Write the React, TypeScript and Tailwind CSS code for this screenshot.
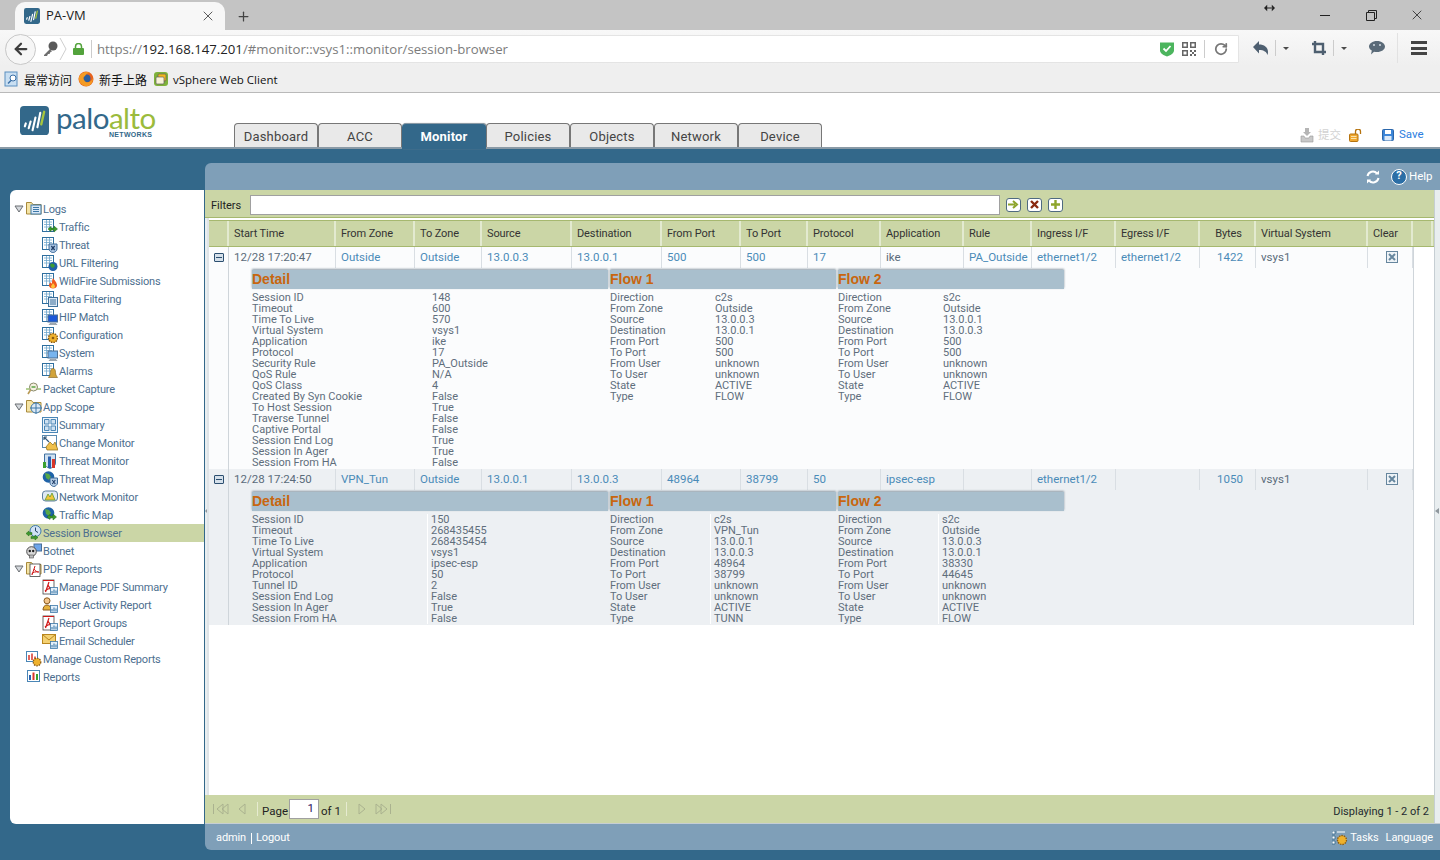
import type { ReactNode } from "react"
import { ArrowLeft, Plus, RotateCw, X } from "lucide-react"

const gridCols =
  "grid-cols-[20px_107px_79px_67px_90px_90px_79px_67px_73px_83px_68px_84px_84px_56px_112px_45px_20px]"

type IconKind = "traffic" | "threat" | "url" | "fire" | "data" | "hip" | "config" | "system" | "bell"

function Page() {
  return (
    <>
      <rect x="0.5" y="0.5" width="11" height="12" fill="#fff" stroke="#2f6f9f" />
      <path d="M2 3h8M2 5.5h8M2 8h8M4.5 1v11M7.5 1v11" stroke="#6ea6cc" strokeWidth="0.8" />
    </>
  )
}

function Badge({ kind }: { kind: IconKind }) {
  switch (kind) {
    case "traffic":
      return <path d="M6 10l3-2.500v1.600h3V7l3.500 3-3.500 3v-2H9v1.500z" fill="#3f9a2e" stroke="#1e6b17" strokeWidth="0.5" />
    case "threat":
      return (
        <>
          <path d="M7 7h8v5c0 2-2 3-4 4-2-1-4-2-4-4z" fill="#a9c4e2" stroke="#3e6a99" />
          <path d="M9.300 9l3.400 4M12.700 9l-3.400 4" stroke="#1f3c66" strokeWidth="1.200" />
        </>
      )
    case "url":
      return (
        <>
          <circle cx="11" cy="11.500" r="4.500" fill="#1f5fa8" />
          <path d="M9 8.500l3 .5 1 2-2 2-2-1-1-2z" fill="#3c9a35" />
        </>
      )
    case "fire":
      return (
        <>
          <path d="M11 5c1 2 4 4 4 7.500 0 2-2 3-4 3s-4-1-4-3c0-2 1-2.500 2-3.500 0 1 .5 1.500 1 1.500 0-2 0-3.500 1-5.500z" fill="#ef5a1e" />
          <path d="M11 10c.5 1 2 2 2 3.500 0 1-1 1.500-2 1.500s-2-.5-2-1.500 1.500-2 2-3.500z" fill="#ffc33a" />
        </>
      )
    case "data":
      return (
        <>
          <rect x="6.500" y="6.500" width="9" height="9" fill="#dce9f5" stroke="#3d6f9a" />
          <path d="M8 9h6M8 11h6M8 13h6" stroke="#3d6f9a" />
        </>
      )
    case "hip":
    case "system":
      return (
        <>
          <rect x="6" y="6" width="9.500" height="7" fill={kind === "hip" ? "#1c58d8" : "#78b4ee"} stroke="#4d6f92" />
          <path d="M8 14.500h6l1 1H7z" fill="#a9b4be" stroke="#6a7683" strokeWidth="0.5" />
        </>
      )
    case "config":
      return (
        <>
          <circle cx="11" cy="11" r="4.500" fill="#efb12c" stroke="#8a5a12" strokeDasharray="1.500 1" strokeWidth="1.500" />
          <circle cx="11" cy="11" r="1.300" fill="#8a5a12" />
        </>
      )
    case "bell":
      return <path d="M11 5.500c2 0 2.500 2 2.500 4 0 2.500 1.500 4 2 5h-9c.5-1 2-2.500 2-5 0-2 .5-4 2.500-4z" fill="#d2a33a" stroke="#7d5c17" strokeWidth="0.6" />
    default:
      return null
  }
}

function LogIcon({ kind }: { kind: IconKind }) {
  return (
    <svg viewBox="0 0 16 16" className="w-4 h-4 shrink-0">
      <Page />
      <Badge kind={kind} />
    </svg>
  )
}

function Folder({ children }: { children: ReactNode }) {
  return (
    <svg viewBox="0 0 16 16" className="w-4 h-4 shrink-0">
      <path d="M.5 13V1.500h5l1.500 2h8V13z" fill="#f5e4a5" stroke="#a88a3c" />
      {children}
    </svg>
  )
}

function PdfPage() {
  return (
    <>
      <rect x="1" y="1" width="11" height="14" fill="#fff" stroke="#444" strokeWidth="0.8" />
      <path d="M1 1.500h11M7 3L3.500 13M6 6c1 3 3 4 6 4.500M3 12c2-2 5-3 8-2.500" fill="none" stroke="#d01818" strokeWidth="1.200" />
    </>
  )
}

function Bars({ x = 8, y = 8 }: { x?: number; y?: number }) {
  return (
    <g transform={`translate(${x} ${y})`}>
      <rect x="0.500" y="0.500" width="7" height="7" fill="#e5f0fa" stroke="#3b78a8" strokeWidth="0.8" />
      <path d="M2 6.500V4M4 6.500V2.500M6 6.500V3.500" stroke="#2d6fa0" strokeWidth="1" />
    </g>
  )
}

function TreeIcon({ kind }: { kind: string }) {
  return (
    <svg viewBox="0 0 16 16" className="w-4 h-4 shrink-0">
      {kind === "packet" && (
        <>
          <path d="M0 8h15" stroke="#6aa32a" />
          <circle cx="7.500" cy="6" r="4" fill="#f5f0e0" stroke="#8a8a6a" />
          <path d="M4.500 9L2 13" stroke="#b89a55" strokeWidth="1.600" />
          <path d="M5.500 6h4" stroke="#3f9a2e" strokeWidth="1.300" />
        </>
      )}
      {kind === "summary" && (
        <>
          <rect x="0.500" y="0.500" width="15" height="15" fill="#eef5fb" stroke="#4a86b6" />
          <path d="M2.500 2.500h4.500v4.500H2.500zM9 2.500h4.500v4.500H9zM2.500 9h4.500v4.500H2.500zM9 9h4.500v4.500H9z" fill="#cfe2f2" stroke="#4a86b6" />
        </>
      )}
      {kind === "change" && (
        <>
          <rect x="0.500" y="0.500" width="14" height="12" fill="#fff" stroke="#5a8ab0" />
          <path d="M2 2l5 5M2 2h3M2 2v3" stroke="#33587a" strokeWidth="1.200" fill="none" />
          <path d="M4 12l4-5 3 3 2-3 3 8H5z" fill="#f0c04a" stroke="#8c6a14" strokeWidth="0.7" />
        </>
      )}
      {kind === "tmonitor" && (
        <>
          <path d="M2.500 1h11v9c0 3-3 4.500-5.500 5.500C5.500 14.500 2.500 13 2.500 10z" fill="#cfe0f0" stroke="#3f70a0" />
          <rect x="1" y="9" width="3" height="6" fill="#3aa02f" />
          <rect x="6" y="3.500" width="3" height="11.500" fill="#2a62b0" />
          <rect x="10" y="6" width="3" height="9" fill="#d8352a" />
        </>
      )}
      {kind === "tmap" && (
        <>
          <circle cx="6.500" cy="6" r="5.800" fill="#1f63a8" />
          <path d="M3 2l4 1 2 3-2 3-3-2z" fill="#58a848" />
          <path d="M8 7h7.500v5c0 2-2 3-3.700 3.700C10 15 8 14 8 12z" fill="#b5cde6" stroke="#3e6a99" />
          <path d="M10.300 9l3 4M13.300 9l-3 4" stroke="#1f3c66" strokeWidth="1.100" />
        </>
      )}
      {kind === "net" && (
        <>
          <rect x="0.500" y="2" width="15" height="10" rx="3" fill="#dfe9f3" stroke="#5d7fa0" />
          <path d="M3 11l3-6 2 3 2-4 3 7z" fill="#f2c43c" stroke="#5d9a2e" strokeWidth="0.8" />
        </>
      )}
      {kind === "tfmap" && (
        <>
          <circle cx="6.500" cy="6" r="5.800" fill="#1f63a8" />
          <path d="M3 2l4 1 2 3-2 3-3-2z" fill="#58a848" />
          <path d="M5 10l3-2.500v1.600h3V7l3.500 3-3.500 3v-2H8v1.500z" fill="#3f9a2e" stroke="#1e6b17" strokeWidth="0.5" />
        </>
      )}
      {kind === "session" && (
        <>
          <circle cx="9.500" cy="6" r="5.500" fill="#cfe2f4" stroke="#3f78ac" />
          <path d="M9.500 2.500V6l2.500 1.500" stroke="#28456a" fill="none" />
          <path d="M0 8.500L3 6v1.600h3v2H3V11zM12 12.500L9 10v1.600H5v2h4V15z" fill="#3f9a2e" stroke="#1e6b17" strokeWidth="0.5" />
        </>
      )}
      {kind === "botnet" && (
        <>
          <rect x="8" y="1" width="7.500" height="7" fill="#6ea6ea" stroke="#4a6f96" />
          <circle cx="5.500" cy="8.500" r="4.800" fill="#d8d8d8" stroke="#4d4d4d" />
          <circle cx="3.800" cy="8" r="1.200" fill="#222" />
          <circle cx="7.200" cy="8" r="1.200" fill="#222" />
          <rect x="3.500" y="12" width="4" height="3" fill="#bdbdbd" stroke="#4d4d4d" strokeWidth="0.6" />
        </>
      )}
      {kind === "mpdf" && (
        <>
          <PdfPage />
          <Bars />
        </>
      )}
      {kind === "user" && (
        <>
          <circle cx="5" cy="3.800" r="3" fill="#f2c48a" stroke="#8a5a1e" />
          <path d="M1 13c0-3 1.500-5 4-5s4 2 4 5z" fill="#e6b23c" stroke="#8a5a1e" />
          <Bars />
        </>
      )}
      {kind === "mail" && (
        <>
          <rect x="0.500" y="1.500" width="13" height="9" fill="#f4d172" stroke="#b9861e" />
          <path d="M.5 1.500L7 7l6.500-5.500" fill="none" stroke="#b9861e" />
          <Bars />
        </>
      )}
      {kind === "custom" && (
        <>
          <rect x="0.500" y="0.500" width="11" height="10" fill="#fff" stroke="#4a86b6" />
          <path d="M3 9V4M6 9V2.500M9 9V5.500" stroke="#d8352a" strokeWidth="1.500" />
          <circle cx="11" cy="11" r="3.800" fill="#efb12c" stroke="#8a5a12" strokeDasharray="1.500 1" strokeWidth="1.300" />
        </>
      )}
      {kind === "reports" && (
        <>
          <rect x="1.500" y="1.500" width="12" height="11" fill="#fff" stroke="#4a86b6" />
          <path d="M4 11V6" stroke="#2a62b0" strokeWidth="2" />
          <path d="M7.500 11V3.500" stroke="#d8352a" strokeWidth="2" />
          <path d="M11 11V5" stroke="#3aa02f" strokeWidth="2" />
        </>
      )}
    </svg>
  )
}

function Triangle() {
  return (
    <svg viewBox="0 0 10 8" className="w-2.5 h-2 shrink-0">
      <path d="M1 1h8L5 7z" fill="#d4d8dc" stroke="#6b6f73" />
    </svg>
  )
}

function TreeRow({
  icon,
  label,
  child,
  open,
  active,
}: {
  icon: ReactNode
  label: string
  child?: boolean
  open?: boolean
  active?: boolean
}) {
  return (
    <div className={`h-[18px] flex items-center ${child ? "pl-[32px]" : "pl-[4px]"} ${active ? "bg-[#cbd6a6]" : ""}`}>
      {!child && <span className="w-[12px] flex items-center shrink-0">{open && <Triangle />}</span>}
      {icon}
      <span className="ml-px mt-[2px] whitespace-nowrap text-[#4d6f8f]">{label}</span>
    </div>
  )
}

function Sidebar() {
  return (
    <aside className="w-[194px] ml-[10px] mt-[41px] h-[634px] bg-white rounded-l-md pt-[10px] text-[11px] tracking-[-0.2px] shrink-0 overflow-hidden">
      <TreeRow open label="Logs" icon={<Folder><rect x="5" y="4" width="10" height="9" fill="#dbe9f6" stroke="#3d78a8" /><path d="M7 6.500h6M7 8.500h6M7 10.500h6" stroke="#3d78a8" /></Folder>} />
      <TreeRow child label="Traffic" icon={<LogIcon kind="traffic" />} />
      <TreeRow child label="Threat" icon={<LogIcon kind="threat" />} />
      <TreeRow child label="URL Filtering" icon={<LogIcon kind="url" />} />
      <TreeRow child label="WildFire Submissions" icon={<LogIcon kind="fire" />} />
      <TreeRow child label="Data Filtering" icon={<LogIcon kind="data" />} />
      <TreeRow child label="HIP Match" icon={<LogIcon kind="hip" />} />
      <TreeRow child label="Configuration" icon={<LogIcon kind="config" />} />
      <TreeRow child label="System" icon={<LogIcon kind="system" />} />
      <TreeRow child label="Alarms" icon={<LogIcon kind="bell" />} />
      <TreeRow label="Packet Capture" icon={<TreeIcon kind="packet" />} />
      <TreeRow open label="App Scope" icon={<Folder><circle cx="10" cy="9" r="5" fill="#dbe9f6" stroke="#3d78a8" /><path d="M4 9h12M10 3v12" stroke="#3d78a8" /></Folder>} />
      <TreeRow child label="Summary" icon={<TreeIcon kind="summary" />} />
      <TreeRow child label="Change Monitor" icon={<TreeIcon kind="change" />} />
      <TreeRow child label="Threat Monitor" icon={<TreeIcon kind="tmonitor" />} />
      <TreeRow child label="Threat Map" icon={<TreeIcon kind="tmap" />} />
      <TreeRow child label="Network Monitor" icon={<TreeIcon kind="net" />} />
      <TreeRow child label="Traffic Map" icon={<TreeIcon kind="tfmap" />} />
      <TreeRow active label="Session Browser" icon={<TreeIcon kind="session" />} />
      <TreeRow label="Botnet" icon={<TreeIcon kind="botnet" />} />
      <TreeRow open label="PDF Reports" icon={<Folder><rect x="4" y="3" width="10" height="12.500" fill="#fff" stroke="#444" strokeWidth="0.8" /><path d="M9 5l-3 9M8 8c1 2 3 3 5 3M5.500 13c2-2 4-2.500 7-2" fill="none" stroke="#d01818" /></Folder>} />
      <TreeRow child label="Manage PDF Summary" icon={<TreeIcon kind="mpdf" />} />
      <TreeRow child label="User Activity Report" icon={<TreeIcon kind="user" />} />
      <TreeRow child label="Report Groups" icon={<TreeIcon kind="mpdf" />} />
      <TreeRow child label="Email Scheduler" icon={<TreeIcon kind="mail" />} />
      <TreeRow label="Manage Custom Reports" icon={<TreeIcon kind="custom" />} />
      <TreeRow label="Reports" icon={<TreeIcon kind="reports" />} />
    </aside>
  )
}

function PanLogo({ className }: { className: string }) {
  return (
    <svg viewBox="0 0 30 30" className={className}>
      <rect width="30" height="30" rx="4" fill="#33688a" />
      <path d="M5 21l1-3M9 23l2-7M13 25l3-13M18 22l3-15" stroke="#fff" strokeWidth="2.200" strokeLinecap="round" />
      <path d="M22 19l3-13" stroke="#a6c63e" strokeWidth="2.400" strokeLinecap="round" />
    </svg>
  )
}

function BrowserChrome() {
  return (
    <div className="font-['Open_Sans',sans-serif]">
      <div className="h-[30px] bg-[#c4c4c4] flex items-end pl-[15px] relative">
        <div className="w-[210px] h-[28px] bg-[#f7f7f7] rounded-t-[10px] flex items-center pl-[9px] pr-[9px]">
          <PanLogo className="w-4 h-4 shrink-0" />
          <span className="ml-[6px] text-[13px] text-[#222]">PA-VM</span>
          <X className="ml-auto w-[16px] h-[16px] text-[#333]" strokeWidth={1.200} />
        </div>
        <Plus className="ml-[11px] mb-[6px] w-[15px] h-[15px] text-[#444]" strokeWidth={2} />
        <div className="ml-auto h-[30px] flex items-center text-[#222] shrink-0">
          <svg viewBox="0 0 12 8" className="w-[11px] h-2 mb-[14px] mr-[27px]">
            <path d="M0 4l3.500-3.500v7zM12 4L8.500 .5v7zM3 3.500h6v1H3z" fill="#222" />
          </svg>
          <span className="w-[46px] flex justify-center"><span className="block w-[10px] h-px bg-[#222]" /></span>
          <span className="w-[46px] flex justify-center">
            <svg viewBox="0 0 11 11" className="w-[11px] h-[11px]" fill="none" stroke="#222"><path d="M.5 2.500h8v8h-8zM2.500 2.500v-2h8v8h-2" /></svg>
          </span>
          <span className="w-[46px] flex justify-center"><X className="w-[16px] h-[16px]" strokeWidth={1.200} /></span>
        </div>
      </div>
      <div className="h-[36px] bg-gradient-to-b from-[#f8f8f8] to-[#efefef] flex items-start pl-[5px] pt-[5px]">
        <div className="w-[1234px] h-[28px] bg-white border border-[#e4e4e4] rounded-l-full flex items-center shrink-0">
          <div className="-ml-px w-[31px] h-[31px] rounded-full border border-[#c8c8c8] bg-[#f6f6f6] flex items-center justify-center shrink-0">
            <ArrowLeft className="w-[18px] h-[18px] text-[#3d3d3d]" strokeWidth={3} />
          </div>
          <svg viewBox="0 0 16 16" className="ml-[6px] w-4 h-4 shrink-0">
            <circle cx="11" cy="5" r="4.500" fill="#595959" />
            <path d="M8 8l-6 6v1h3l1-2h1.500l1-2 1.500-.5z" fill="#6e6e6e" />
          </svg>
          <svg viewBox="0 0 8 24" className="ml-px w-2 h-6 shrink-0"><path d="M1 1l6 11-6 11" fill="none" stroke="#cfcfcf" /></svg>
          <svg viewBox="0 0 11 12" className="ml-[6px] w-[11px] h-3 shrink-0">
            <rect x="0" y="5" width="11" height="7" rx="1" fill="#53a33c" />
            <path d="M2.500 5V3.500a3 3 0 016 0V5" fill="none" stroke="#53a33c" strokeWidth="1.500" />
          </svg>
          <span className="ml-[7px] w-px h-[18px] bg-[#ccc] shrink-0" />
          <span className="ml-[5px] mt-[1px] text-[13.2px] text-[#7c7c7c] whitespace-nowrap">
            https://<span className="text-[#222]">192.168.147.201</span>/#monitor::vsys1::monitor/session-browser
          </span>
          <svg viewBox="0 0 14 16" className="ml-auto w-[14px] h-4 shrink-0">
            <path d="M0 1.500h14v8c0 3-4 5-7 6-3-1-7-3-7-6z" fill="#4cb55e" />
            <path d="M3.500 7.500L6 10l4.500-5" fill="none" stroke="#fff" strokeWidth="1.800" />
          </svg>
          <svg viewBox="0 0 14 14" className="ml-[8px] w-[14px] h-[14px] shrink-0" fill="#666">
            <path d="M0 0h6v6H0zM1.500 1.500v3h3v-3zM8 0h6v6H8zM9.500 1.500v3h3v-3zM0 8h6v6H0zM1.500 9.500v3h3v-3z" fillRule="evenodd" />
            <path d="M8 8h2v2H8zM12 8h2v2h-2zM10 10h2v2h-2zM8 12h2v2H8zM12 12h2v2h-2z" />
          </svg>
          <span className="ml-[8px] w-px h-[18px] bg-[#ccc] shrink-0" />
          <RotateCw className="ml-[9px] mr-[10px] w-[14px] h-[14px] text-[#777] shrink-0" strokeWidth={3} />
        </div>
        <div className="flex items-center h-[24px] mt-[1px] shrink-0">
          <svg viewBox="0 0 15 14" className="ml-[14px] w-[15px] h-[14px]">
            <path d="M6 0v3.500c5 0 9 2.500 9 7.500 0 1-.2 2-.5 3-.8-3-3.500-5-8.500-5v3.500L0 6z" fill="#4e5f70" />
          </svg>
          <span className="ml-[7px] w-px h-[16px] bg-[#ccc]" />
          <span className="ml-[7px] w-0 h-0 border-x-[3.500px] border-x-transparent border-t-[3.500px] border-t-[#4a4a4a]" />
          <svg viewBox="0 0 14 14" className="ml-[23px] w-[14px] h-[14px]" fill="none" stroke="#4e5f70" strokeWidth="2.400"><path d="M3 0v11h11M0 3h11v11" /></svg>
          <span className="ml-[7px] w-px h-[16px] bg-[#ccc]" />
          <span className="ml-[7px] w-0 h-0 border-x-[3.500px] border-x-transparent border-t-[3.500px] border-t-[#4a4a4a]" />
          <svg viewBox="0 0 16 14" className="ml-[22px] w-4 h-[14px]">
            <path d="M8 0c4.500 0 8 2.500 8 5.500S12.500 11 8 11c-1 0-2 0-3-.3L2 13.500l.8-4C1 8.500 0 7 0 5.500 0 2.500 3.500 0 8 0z" fill="#5a6a78" />
            <circle cx="5" cy="4" r="1" fill="#d5dde3" />
            <circle cx="11" cy="4" r="1" fill="#d5dde3" />
          </svg>
          <span className="ml-[12px] w-px h-[30px] bg-[#e2e2e2]" />
          <div className="ml-[13px] w-4 flex flex-col gap-[2.500px]">
            <span className="h-[3px] bg-[#444]" />
            <span className="h-[3px] bg-[#444]" />
            <span className="h-[3px] bg-[#444]" />
          </div>
        </div>
      </div>
      <div className="h-[27px] bg-[#efefef] border-b border-[#b9b9b9] flex items-center pl-[4px] text-[12px] text-[#111]">
        <svg viewBox="0 0 16 16" className="w-4 h-4 shrink-0">
          <rect x="1" y="1" width="12" height="14" fill="#c9dff2" stroke="#5b8fc0" />
          <circle cx="9" cy="7" r="3" fill="#fff" stroke="#3a6fa5" />
          <path d="M7 9.500l-3 3" stroke="#3a6fa5" strokeWidth="1.500" />
        </svg>
        <span className="ml-[4px] mt-[2px] font-['Noto_Sans_CJK_SC',sans-serif]">最常访问</span>
        <svg viewBox="0 0 16 16" className="ml-[6px] w-4 h-4 shrink-0">
          <circle cx="8" cy="8" r="7.500" fill="#e8611d" />
          <circle cx="8.500" cy="7.500" r="4" fill="#2c5e9f" />
          <path d="M1 6c2-5 8-6 11-4-3 0-4 1-5 3-2 1-2 4 1 6 3 1 6-1 7-4 0 5-3 9-8 8-4-1-7-5-6-9z" fill="#f49b24" />
        </svg>
        <span className="ml-[5px] mt-[2px] font-['Noto_Sans_CJK_SC',sans-serif]">新手上路</span>
        <svg viewBox="0 0 16 16" className="ml-[6px] w-4 h-4 shrink-0">
          <rect x="1" y="1" width="14" height="14" rx="3" fill="#7fb23a" />
          <rect x="5" y="3" width="8" height="7" rx="1" fill="#f5b81c" stroke="#5f5f5f" strokeWidth="0.700" />
          <rect x="3" y="6" width="8" height="7" rx="1" fill="#f8f2d8" stroke="#5f5f5f" strokeWidth="0.700" />
        </svg>
        <span className="ml-[4px] mt-[2px] text-[11.5px]">vSphere Web Client</span>
      </div>
    </div>
  )
}

const tabs = ["Dashboard", "ACC", "Monitor", "Policies", "Objects", "Network", "Device"]

function AppHeader() {
  return (
    <div className="h-[56px] bg-white border-b-2 border-[#8a9aa6] flex pl-[20px] shrink-0">
      <div className="w-[214px] mt-[13px] flex items-start shrink-0">
        <PanLogo className="w-[29px] h-[29px] shrink-0" />
        <div className="ml-[7px] -mt-[1px] w-[100px]">
          <div className="font-['Lato',sans-serif] text-[29.5px] leading-[26px] tracking-[-0.5px] whitespace-nowrap">
            <span className="text-[#33688a]">palo</span>
            <span className="text-[#9bbb3c]">alto</span>
          </div>
          <div className="pl-[53px] font-['Liberation_Sans',sans-serif] font-bold text-[7px] leading-[8px] tracking-[0.3px] text-[#33688a]">NETWORKS</div>
        </div>
      </div>
      <div className="flex items-end font-['Roboto',sans-serif] text-[13px] tracking-[0.2px]">
        {tabs.map((t) => (
          <div
            key={t}
            className={
              t === "Monitor"
                ? "w-[84px] h-[26px] -mb-[2px] pt-[1px] bg-[#33688a] text-white font-bold rounded-t-[4px] border-t border-[#8a9aa6] flex items-center justify-center shadow-[1px_0_1px_#999]"
                : "w-[84px] h-[24px] pt-[2px] bg-[#e9e9e9] text-[#444] rounded-t-[4px] border border-b-0 border-[#777] flex items-center justify-center"
            }
          >
            {t}
          </div>
        ))}
      </div>
      <div className="ml-auto flex items-center h-[54px] pt-[30px] pr-[17px] text-[11.5px] font-['Roboto',sans-serif]">
        <svg viewBox="0 0 14 15" className="w-[14px] h-[15px]">
          <path d="M5 0h4v4h2L7 8 3 4h2z" fill="#b5b5b5" />
          <path d="M1 8h3l1 2h4l1-2h3v6H1z" fill="#c8c8c8" stroke="#999" strokeWidth="0.600" />
        </svg>
        <span className="ml-[4px] text-[#d2d2d2] font-['Noto_Sans_CJK_SC',sans-serif]">提交</span>
        <svg viewBox="0 0 13 13" className="ml-[8px] w-[13px] h-[13px]">
          <rect x="0.500" y="5" width="8.500" height="7.500" rx="1" fill="#f0a830" stroke="#b5730f" />
          <path d="M6.500 5V2.500a2.500 2.500 0 015 0V5" fill="none" stroke="#b5730f" strokeWidth="1.300" />
          <path d="M2 7.500h5.500M2 9.500h5.500" stroke="#fbe3ac" />
        </svg>
        <svg viewBox="0 0 12 12" className="ml-[20px] w-3 h-3">
          <rect x="0.500" y="0.500" width="11" height="11" rx="1" fill="#3d86d8" stroke="#2a66aa" />
          <rect x="3" y="1" width="6" height="4" fill="#fff" />
          <rect x="2.500" y="7" width="7" height="4.500" fill="#dbe9f8" />
        </svg>
        <span className="ml-[5px] w-[24px] text-[#2b7de0]">Save</span>
      </div>
    </div>
  )
}

type Cell = { text?: string; link?: boolean; center?: boolean }

const headers: [string, boolean?][] = [
  ["", false], ["Start Time"], ["From Zone"], ["To Zone"], ["Source"], ["Destination"], ["From Port"],
  ["To Port"], ["Protocol"], ["Application"], ["Rule"], ["Ingress I/F"], ["Egress I/F"], ["Bytes", true],
  ["Virtual System"], ["Clear"], [""],
]

function HeaderRow() {
  return (
    <div className={`grid ${gridCols} h-[27px] bg-[#cbd6a6] border-b border-[#a6b86f] border-t border-t-[#a6b86f] text-[#333] text-[11px] tracking-[-0.1px]`}>
      {headers.map(([h, center], i) => (
        <div key={i} className={`flex items-center pt-[2px] border-r-2 border-[#e3ead0] ${i === 16 ? "border-r-0" : ""} ${center ? "justify-center pl-[3px]" : "pl-[5px]"}`}>
          {h}
        </div>
      ))}
    </div>
  )
}

function ExpandBox() {
  return (
    <span className="w-[10px] h-[9px] border border-[#2c4f70] bg-[#d5e0ea] rounded-[1px] flex items-center justify-center">
      <span className="w-[6px] h-[1.500px] bg-[#2c4f70]" />
    </span>
  )
}

function ClearBox() {
  return (
    <svg viewBox="0 0 12 12" className="w-3 h-3 ml-[3px] -mt-[1px]">
      <rect x="0.500" y="0.500" width="11" height="11" fill="#eef3f7" stroke="#66869e" />
      <path d="M3 3l6 6M9 3l-6 6" stroke="#66869e" strokeWidth="2" />
    </svg>
  )
}

function SessionRow({ cells }: { cells: Cell[] }) {
  return (
    <div className={`grid ${gridCols} h-[21px]`}>
      <div className="flex items-center justify-center"><ExpandBox /></div>
      {cells.map((c, i) => (
        <div
          key={i}
          className={`flex items-center pl-[5px] whitespace-nowrap border-r border-[#d9dee3] ${c.center ? "justify-center pl-0" : ""} ${c.link ? "text-[#4a8bb8]" : "text-[#5a6b7a]"}`}
        >
          {c.text}
        </div>
      ))}
      <div className="flex items-center justify-center border-r border-[#d9dee3]"><ClearBox /></div>
      <div />
    </div>
  )
}

function DetailBlock({ title, rows, width, labelWidth, lined }: { title: string; rows: [string, string][]; width: string; labelWidth: string; lined?: boolean }) {
  return (
    <div className={`${width} shrink-0`}>
      <div className="h-[19px] bg-[#a9bfcd] shadow-[0_-1px_2px_#8b9aa6] flex items-center text-[#c8660f] font-bold text-[14px] font-['Liberation_Sans',sans-serif]">
        {title}
      </div>
      <div className="pt-[3px] text-[11px]">
        {rows.map(([k, v]) => (
          <div key={k} className="flex h-[11px] items-center text-[#5f6e7c] leading-[11px] whitespace-nowrap">
            <span className={`${labelWidth} shrink-0 h-[11px] ${lined ? "border-r border-white" : ""}`}>{k}</span>
            <span className={lined ? "pl-[3px]" : "pl-[4px]"}>{v}</span>
          </div>
        ))}
      </div>
    </div>
  )
}

const flowKeys = ["Direction", "From Zone", "Source", "Destination", "From Port", "To Port", "From User", "To User", "State", "Type"]
const zip = (vals: string[]): [string, string][] => flowKeys.map((k, i) => [k, vals[i]])

type Session = {
  cells: Cell[]
  detail: [string, string][]
  flow1: string[]
  flow2: string[]
  alt?: boolean
}

const sessions: Session[] = [
  {
    cells: [
      { text: "12/28 17:20:47" }, { text: "Outside", link: true }, { text: "Outside", link: true },
      { text: "13.0.0.3", link: true }, { text: "13.0.0.1", link: true }, { text: "500", link: true },
      { text: "500", link: true }, { text: "17", link: true }, { text: "ike" }, { text: "PA_Outside", link: true },
      { text: "ethernet1/2", link: true }, { text: "ethernet1/2", link: true }, { text: "1422", link: true, center: true },
      { text: "vsys1" },
    ],
    detail: [
      ["Session ID", "148"], ["Timeout", "600"], ["Time To Live", "570"], ["Virtual System", "vsys1"],
      ["Application", "ike"], ["Protocol", "17"], ["Security Rule", "PA_Outside"], ["QoS Rule", "N/A"],
      ["QoS Class", "4"], ["Created By Syn Cookie", "False"], ["To Host Session", "True"], ["Traverse Tunnel", "False"],
      ["Captive Portal", "False"], ["Session End Log", "True"], ["Session In Ager", "True"], ["Session From HA", "False"],
    ],
    flow1: ["c2s", "Outside", "13.0.0.3", "13.0.0.1", "500", "500", "unknown", "unknown", "ACTIVE", "FLOW"],
    flow2: ["s2c", "Outside", "13.0.0.1", "13.0.0.3", "500", "500", "unknown", "unknown", "ACTIVE", "FLOW"],
  },
  {
    alt: true,
    cells: [
      { text: "12/28 17:24:50" }, { text: "VPN_Tun", link: true }, { text: "Outside", link: true },
      { text: "13.0.0.1", link: true }, { text: "13.0.0.3", link: true }, { text: "48964", link: true },
      { text: "38799", link: true }, { text: "50", link: true }, { text: "ipsec-esp", link: true }, { text: "" },
      { text: "ethernet1/2", link: true }, { text: "" }, { text: "1050", link: true, center: true }, { text: "vsys1" },
    ],
    detail: [
      ["Session ID", "150"], ["Timeout", "268435455"], ["Time To Live", "268435454"], ["Virtual System", "vsys1"],
      ["Application", "ipsec-esp"], ["Protocol", "50"], ["Tunnel ID", "2"], ["Session End Log", "False"],
      ["Session In Ager", "True"], ["Session From HA", "False"],
    ],
    flow1: ["c2s", "VPN_Tun", "13.0.0.1", "13.0.0.3", "48964", "38799", "unknown", "unknown", "ACTIVE", "TUNN"],
    flow2: ["s2c", "Outside", "13.0.0.3", "13.0.0.1", "38330", "44645", "unknown", "unknown", "ACTIVE", "FLOW"],
  },
]

function SessionBlock({ s }: { s: Session }) {
  return (
    <div className={`${s.alt ? "bg-[#edf0f3] h-[156px]" : "bg-[#fbfcfd] h-[222px]"} relative mr-[20px]`}>
      <div className="absolute left-[19px] top-0 bottom-0 w-px bg-[#cfd5da]" />
      <div className="absolute right-0 top-0 bottom-0 w-px bg-[#cfd5da]" />
      <SessionRow cells={s.cells} />
      <div className="flex pl-[43px] pt-[2px] gap-[2px]">
        <DetailBlock title="Detail" rows={s.detail} width="w-[356px]" labelWidth="w-[176px]" lined={s.alt} />
        <DetailBlock title="Flow 1" rows={zip(s.flow1)} width="w-[226px]" labelWidth="w-[101px]" lined={s.alt} />
        <DetailBlock title="Flow 2" rows={zip(s.flow2)} width="w-[226px]" labelWidth="w-[101px]" lined={s.alt} />
      </div>
    </div>
  )
}

function PagerIcon({ d }: { d: string }) {
  return (
    <svg viewBox="0 0 16 12" className="w-4 h-3 shrink-0" fill="none" stroke="#aab28f">
      <path d={d} />
    </svg>
  )
}

function FilterButton({ children }: { children: ReactNode }) {
  return (
    <span className="ml-[6px] w-[15px] h-[14px] rounded-[3px] border border-[#4f6a80] bg-white flex items-center justify-center">
      {children}
    </span>
  )
}

function MainPanel() {
  return (
    <main className="w-[1235px] h-[687px] mt-[14px] bg-[#7f9fb8] rounded-tl-[6px] rounded-bl-[6px] flex flex-col shrink-0 text-[11.5px]">
      <div className="h-[27px] flex items-center justify-end pr-[9px] text-white shrink-0">
        <svg viewBox="0 0 14 14" className="w-[14px] h-[14px]" fill="none" stroke="#fff" strokeWidth="2">
          <path d="M1.500 6a5.500 5.500 0 019.500-2.500M12.500 8A5.500 5.500 0 013 10.500" />
          <path d="M9 4.500h4v-4zM5 9.500H1v4z" fill="#fff" stroke="none" />
        </svg>
        <span className="ml-[11px] w-[16px] h-[16px] rounded-full bg-[#2b6ea6] border-[1.500px] border-white flex items-center justify-center text-[11px] font-bold">?</span>
        <span className="ml-[2px] w-[22px] whitespace-nowrap">Help</span>
      </div>
      <div className="flex-1 min-h-0 flex bg-[#e9eef0]">
        <div className="w-[3px] bg-[#e9eef0] shrink-0 flex items-center pt-[8px]">
          <svg viewBox="0 0 3 6" className="w-[3px] h-1.5"><path d="M3 0L0 3l3 3z" fill="#8f979d" /></svg>
        </div>
        <div className="flex-1 flex flex-col bg-white min-w-0">
          <div className="h-[28px] -ml-[3px] pt-[2px] bg-[#cbd6a6] border-b border-[#a6b86f] flex items-center pl-[6px] shrink-0 text-[#222]">
            <span className="w-[39px] mt-[3px] text-[11px]">Filters</span>
            <span className="w-[750px] h-[20px] bg-white border border-[#a0a0a0]" />
            <FilterButton>
              <svg viewBox="0 0 11 9" className="w-[11px] h-[9px]"><path d="M0 4.500h7M5 1l4 3.500L5 8" fill="none" stroke="#8ea52c" strokeWidth="2" /></svg>
            </FilterButton>
            <FilterButton>
              <svg viewBox="0 0 9 9" className="w-[9px] h-[9px]"><path d="M1 1l7 7M8 1l-7 7" stroke="#8a2a10" strokeWidth="2.400" /></svg>
            </FilterButton>
            <FilterButton>
              <svg viewBox="0 0 9 9" className="w-[9px] h-[9px]"><path d="M4.500 0v9M0 4.500h9" stroke="#8ea52c" strokeWidth="2.400" /></svg>
            </FilterButton>
          </div>
          <div className="flex-1 min-h-0 pt-[2px] border-l-2 border-[#dfe4e8] -ml-[1px]">
            <HeaderRow />
            {sessions.map((s, i) => (
              <SessionBlock key={i} s={s} />
            ))}
          </div>
          <div className="h-[28px] -ml-[3px] bg-[#cbd6a6] flex items-center pl-[8px] pr-[5px] shrink-0 text-[#222]">
            <PagerIcon d="M.5 1v10M10 1L4 6l6 5zM15 1L9 6l6 5z" />
            <span className="ml-[4px]"><PagerIcon d="M12 1L6 6l6 5z" /></span>
            <span className="ml-[8px] w-px h-[14px] bg-[#e6ebd0]" />
            <span className="ml-[4px] mt-[6px] w-[27px]">Page</span>
            <span className="w-[30px] h-[20px] bg-white border border-[#a0a0a0] flex items-center justify-end pr-[4px] text-[#2a0a5a]">1</span>
            <span className="ml-[2px] mt-[6px] w-[19px] whitespace-nowrap">of 1</span>
            <span className="ml-[6px] w-px h-[14px] bg-[#e6ebd0]" />
            <span className="ml-[8px]"><PagerIcon d="M4 1l6 5-6 5z" /></span>
            <span className="ml-[4px]"><PagerIcon d="M1 1l6 5-6 5zM6 1l6 5-6 5zM15.500 1v10" /></span>
            <span className="ml-auto mt-[6px] text-[11px] text-[#1e2a30]">Displaying 1 - 2 of 2</span>
          </div>
        </div>
        <div className="w-[6px] bg-[#e9eef0] shrink-0 flex items-center justify-start pt-[8px] border-l border-[#c6ced3]">
          <svg viewBox="0 0 4 6" className="w-1 h-1.5"><path d="M4 0L0 3l4 3z" fill="#8f979d" /></svg>
        </div>
      </div>
      <div className="h-[27px] pt-[2px] border-t border-[#c6ced3] flex items-center pl-[11px] pr-[7px] text-white text-[11px] tracking-[-0.1px] shrink-0">
        <span className="w-[28px]">admin</span>
        <span className="ml-[7px] w-px h-[11px] bg-white" />
        <span className="ml-[4px]">Logout</span>
        <svg viewBox="0 0 16 15" className="ml-auto w-4 h-[15px]">
          <path d="M0 0h3v3H0zM0 5h3v3H0zM0 10h3v3H0z" fill="#fff" stroke="#33688a" strokeWidth="0.800" />
          <path d="M5 1h8" stroke="#fff" />
          <circle cx="10" cy="9" r="4.500" fill="#efb12c" stroke="#8a5a12" strokeDasharray="1.500 1" strokeWidth="1.300" />
        </svg>
        <span className="ml-[2px]">Tasks</span>
        <span className="ml-[7px]">Language</span>
      </div>
    </main>
  )
}

export default function App() {
  return (
    <div className="w-[1440px] h-[860px] overflow-hidden bg-[#33688a] flex flex-col">
      <BrowserChrome />
      <AppHeader />
      <div className="flex-1 min-h-0 flex font-['Roboto',sans-serif] items-start">
        <Sidebar />
        <div className="w-px shrink-0" />
        <MainPanel />
      </div>
    </div>
  )
}
